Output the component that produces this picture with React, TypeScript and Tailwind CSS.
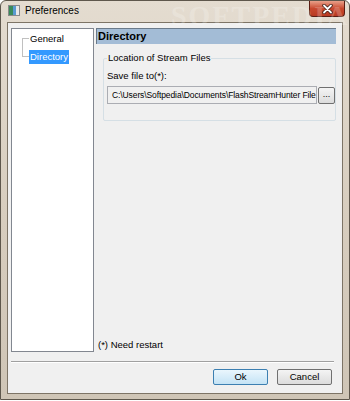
import React from 'react';

const ui = { fontFamily: '"Liberation Sans", Arial, sans-serif' };

function CloseButton() {
  return (
    <div className="ml-auto mr-[4px] h-[16px] w-[36px] rounded-b-[4px] border border-t-0 border-[#5a1e14] bg-gradient-to-b from-[#e8a08a] via-[#c8482e] to-[#b83a22] flex items-center justify-center">
      <svg width="11" height="10" viewBox="0 0 11 10">
        <path d="M2 1.5 L9 8.5 M9 1.5 L2 8.5" stroke="#3a1a12" strokeWidth="3.4" strokeLinecap="round" />
        <path d="M2 1.5 L9 8.5 M9 1.5 L2 8.5" stroke="#ffffff" strokeWidth="1.8" strokeLinecap="round" />
      </svg>
    </div>
  );
}

function AppIcon() {
  return (
    <div className="w-[12px] h-[11px] border border-[#8a8a8a] bg-white flex">
      <div className="w-[4px] h-full bg-[#3a8a5a]" />
      <div className="w-[3px] h-full bg-[#5a9ad0]" />
      <div className="flex-1 bg-[#e8e8e8]" />
    </div>
  );
}

function Tree() {
  return (
    <div className="relative w-[83px] h-[324px] bg-white border border-[#828790]">
      {/* connectors */}
      <div className="absolute left-[10px] top-[9px] w-0 h-[19px] border-l border-[#c0c0c0]" />
      <div className="absolute left-[10px] top-[9px] w-[7px] h-0 border-t border-[#c0c0c0]" />
      <div className="absolute left-[10px] top-[27px] w-[7px] h-0 border-t border-[#c0c0c0]" />
      <div className="pl-[17px] pt-[3px] text-[9.5px] leading-[13px] text-black">
        <div className="px-[1px] h-[13px]">General</div>
        <div className="mt-[5px] inline-block px-[1px] h-[14px] leading-[14px] bg-[#3399ff] text-white">Directory</div>
      </div>
    </div>
  );
}

function Button({ label, primary }: { label: string; primary?: boolean }) {
  return (
    <div
      className={`w-[55px] h-[16px] rounded-[2px] border text-[9.5px] leading-[14px] text-center text-black bg-gradient-to-b ${
        primary ? 'border-[#3c7fb1] from-[#eaf6fd] to-[#c4e3f5]' : 'border-[#707070] from-[#f4f4f4] to-[#dcdcdc]'
      }`}
    >
      {label}
    </div>
  );
}

export default function App() {
  return (
    <div style={ui} className="w-[350px] h-[401px] overflow-hidden bg-white">
      <div className="w-[350px] h-[400px] flex flex-col rounded-t-[6px] border border-[#5e574c] bg-gradient-to-b from-[#e4dcd0] via-[#d8cebf] to-[#cfc5b6]">
        {/* title bar */}
        <div className="relative h-[21px] flex items-start">
          <div className="absolute left-[170px] top-[-6px] text-[28px] font-bold tracking-[2px] text-white opacity-20" style={{ fontFamily: '"Liberation Serif", serif' }}>
            SOFTPEDIA
          </div>
          <div className="flex items-center h-[18px] pl-[7px] gap-[5px]">
            <AppIcon />
            <span className="text-[10px] text-black">Preferences</span>
          </div>
          <CloseButton />
        </div>

        {/* client area */}
        <div className="flex-1 mx-[6px] mb-[5px] border border-[#7d7466] bg-[#f0f0f0] flex flex-col">
          <div className="flex pt-[5px] pl-[3px]">
            <Tree />
            <div className="ml-[2px] w-[240px] h-[324px] flex flex-col">
              <div className="h-[16px] bg-[#a3bcd6] border-t border-l border-[#6a7a8a] pl-[1px] text-[11px] leading-[14px] font-bold text-black">
                Directory
              </div>
              <div className="relative mt-[14px] ml-[7px] w-[233px] h-[63px] rounded-[2px] border border-[#d5dfe5]">
                <div className="absolute left-[3px] top-[-7px] px-[1px] bg-[#f0f0f0] text-[9.5px] leading-[12px] text-black">
                  Location of Stream Files
                </div>
                <div className="pt-[11px] pl-[3px] text-[9.5px] leading-[12px] text-black">Save file to(*):</div>
                <div className="flex items-center mt-[4px] ml-[3px] gap-[1px]">
                  <div className="w-[211px] h-[18px] border border-[#abadb3] bg-[#f0f0f0] overflow-hidden whitespace-nowrap pl-[4px] text-[8.5px] tracking-[-0.1px] leading-[16px] text-black">
                    C:\Users\Softpedia\Documents\FlashStreamHunter File
                  </div>
                  <div className="w-[17px] h-[17px] rounded-[2px] border border-[#707070] bg-gradient-to-b from-[#f4f4f4] to-[#dcdcdc] text-[9px] leading-[12px] text-center text-black">
                    ...
                  </div>
                </div>
              </div>
              <div className="mt-auto mb-[1px] ml-[2px] text-[9.5px] leading-[12px] text-black">(*) Need restart</div>
            </div>
          </div>
          <div className="mt-[9px] ml-[3px] w-[323px] h-[2px] border-t border-[#a0a0a0] border-b-white border-b" />
          <div className="flex justify-end gap-[9px] mt-[6px] pr-[10px]">
            <Button label="Ok" primary />
            <Button label="Cancel" />
          </div>
        </div>
      </div>
    </div>
  );
}
